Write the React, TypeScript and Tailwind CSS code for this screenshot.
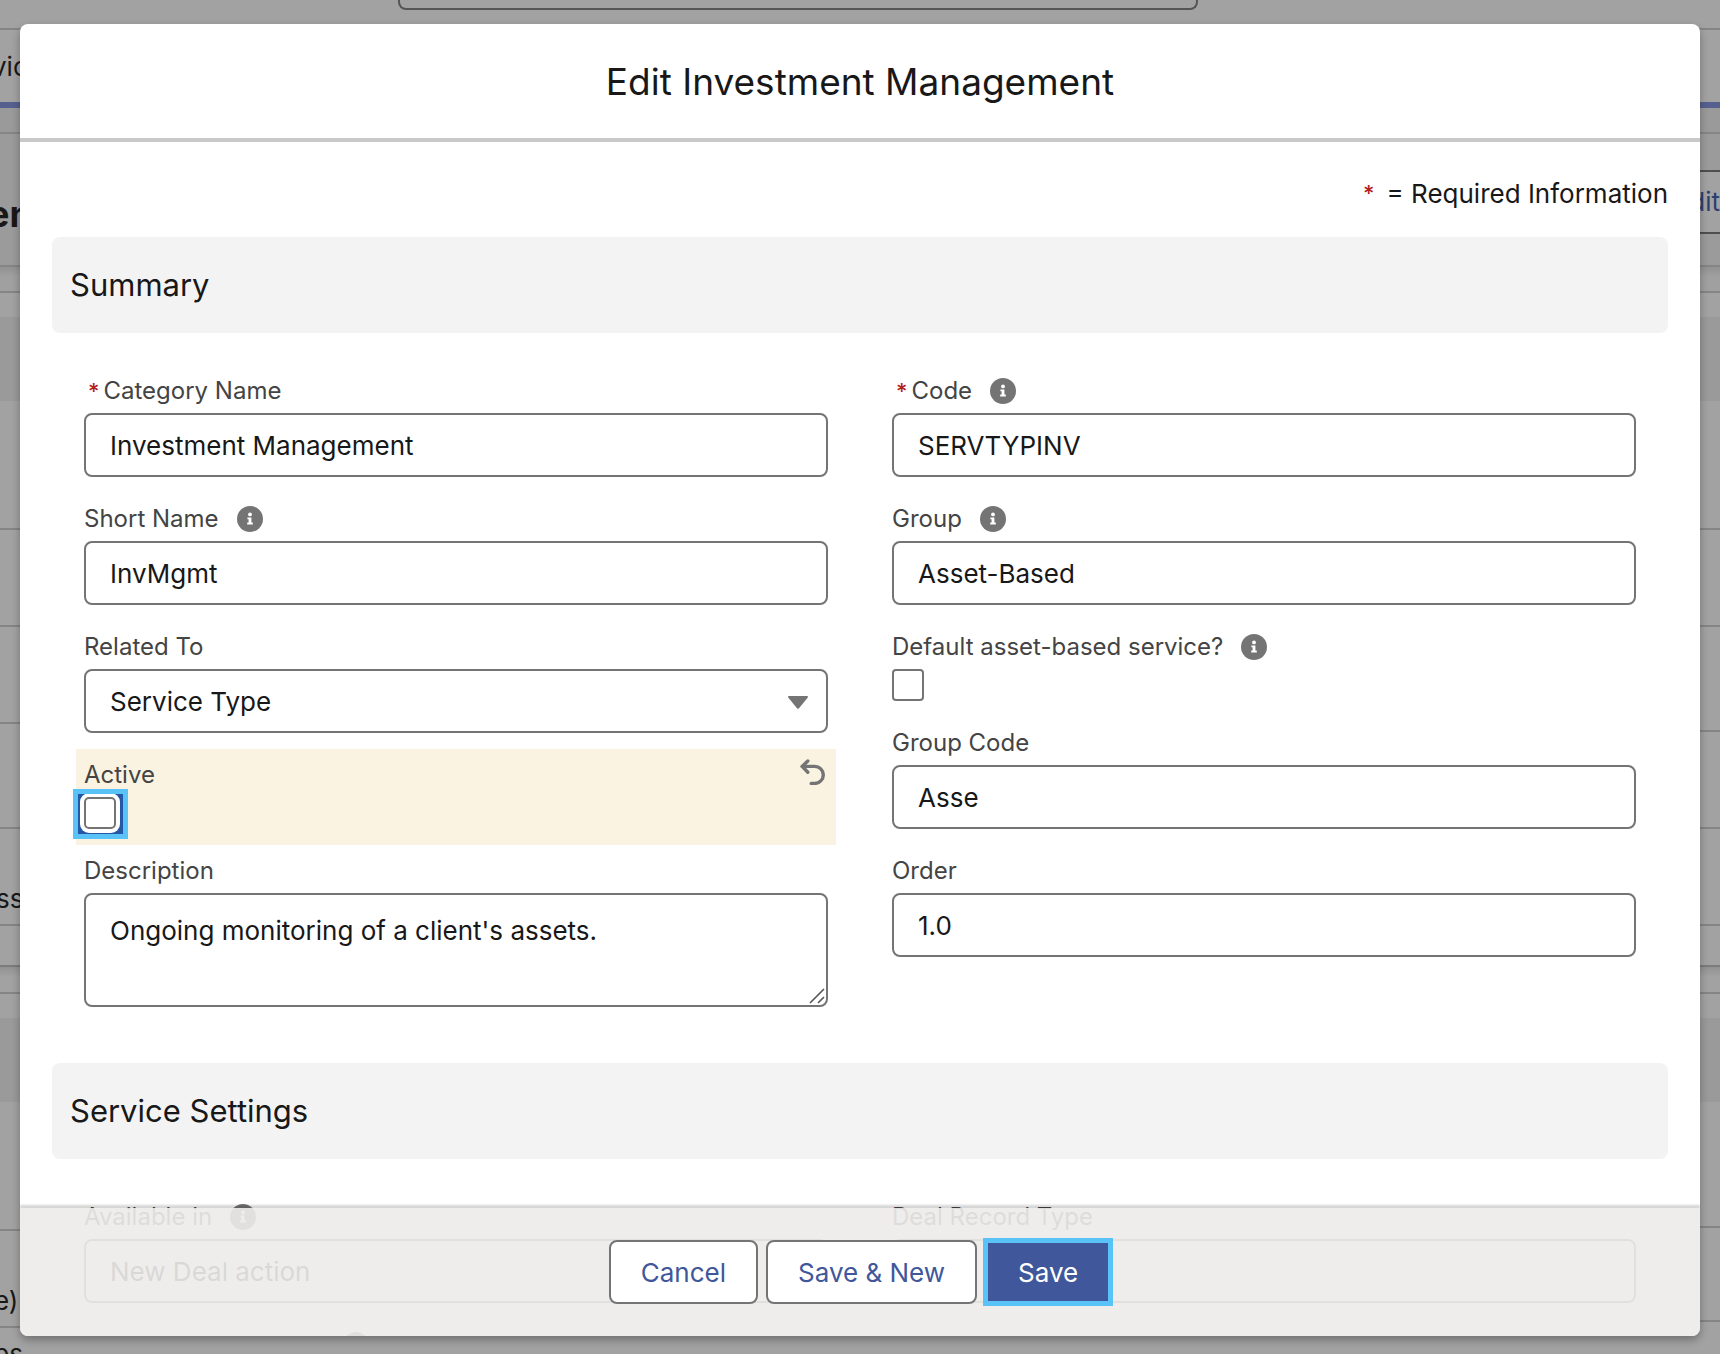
import React, { useState } from "react";

const controlClass =
  "block h-16 w-full rounded-lg border-2 border-[#747474] bg-white px-6 text-[26px] text-[#181818] outline-none";

function InfoIcon() {
  return (
    <svg viewBox="0 0 26 26" className="h-[26px] w-[26px] shrink-0" aria-hidden="true">
      <circle cx="13" cy="13" r="13" fill="#747474" />
      <circle cx="13" cy="8.4" r="1.9" fill="#fff" />
      <path d="M10.4 11.4h4v5.2h1.4v1.8h-5.6v-1.8h1.4v-3.4h-1.2z" fill="#fff" />
    </svg>
  );
}

interface FieldProps {
  id: string;
  label: string;
  required?: boolean;
  info?: boolean;
  changed?: boolean;
  onUndo?: () => void;
  children: React.ReactNode;
}

function Field({ id, label, required, info, changed, onUndo, children }: FieldProps) {
  return (
    <div className={`px-2 pt-2 pb-4 ${changed ? "bg-[#faf3e1]" : ""}`}>
      <div className="flex h-10 items-start text-[24px] leading-[36px] text-[#444444]">
        {required && <span className="mr-1 ml-1 text-[22px] font-medium text-[#b3201c]">*</span>}
        <label htmlFor={id}>{label}</label>
        {info && (
          <button type="button" aria-label={`Help ${label}`} className="ml-[18px] flex h-9 items-center">
            <InfoIcon />
          </button>
        )}
        {changed && (
          <button type="button" aria-label={`Undo ${label}`} onClick={onUndo} className="ml-auto">
            <svg
              viewBox="0 0 28 28"
              className="h-7 w-7"
              fill="none"
              stroke="#747474"
              strokeWidth="3.4"
              strokeLinecap="round"
              strokeLinejoin="round"
            >
              <path d="M7.8 4 2.2 9.4l5.6 5.8" />
              <path d="M2.2 9.4h12.6a8.5 8.5 0 0 1 0 17h-3.6" />
            </svg>
          </button>
        )}
      </div>
      {children}
    </div>
  );
}

function TextField({ value, ...field }: { value: string } & Omit<FieldProps, "children">) {
  return (
    <Field {...field}>
      <input id={field.id} type="text" defaultValue={value} className={controlClass} />
    </Field>
  );
}

function SectionTitle({ children }: { children: React.ReactNode }) {
  return (
    <h3 className="flex h-24 items-center rounded-lg bg-[#f3f3f3] px-[18px] text-[31px] text-[#181818]">
      {children}
    </h3>
  );
}

// The record page, dimmed behind the dialog
function RecordPage() {
  return (
    <div aria-hidden="true" className="h-full overflow-hidden bg-[#a2a2a2] text-[26px] text-[#181818]">
      <div className="flex h-[30px] items-start justify-center border-b-2 border-[#858585] pr-[124px]">
        <div className="h-2.5 w-[800px] rounded-b-lg border-2 border-t-0 border-[#555555]" />
      </div>
      <div className="flex h-[78px] items-center border-b-[6px] border-[#55608f]">
        <span className="-ml-2">vices</span>
      </div>
      <div className="h-6 bg-[#9a9a9a]" />
      <div className="flex h-[135px] items-center justify-between border-y-2 border-[#858585] bg-[#9b9b9b]">
        <span className="-ml-3 pt-7 text-[36px] font-bold">ent</span>
        <span className="mt-1 -mr-1 flex h-16 items-center border-y-2 border-[#4f4f4f] bg-[#a2a2a2] pr-1 pl-8 text-[#2f3f70]">
          Edit
        </span>
      </div>
      <div className="h-6 bg-linear-to-b from-[#929292] to-[#a0a0a0] to-40%" />
      <div className="h-[26px] border-t-2 border-[#858585]" />
      <div className="h-[84px] bg-[#9a9a9a]" />
      <div className="flex justify-between">
        <div className="w-1/2">
          <div className="h-[129px] border-b-2 border-[#858585]" />
          <div className="h-[97px] border-b-2 border-[#858585]" />
          <div className="h-[97px] border-b-2 border-[#858585]" />
          <div className="h-[105px] border-b-2 border-[#858585]" />
          <div className="flex h-[97px] items-end border-b-2 border-[#858585] pb-1.5">
            <span className="-ml-1">ss</span>
          </div>
        </div>
        <div className="w-1/2">
          <div className="h-[129px] border-b-2 border-[#858585]" />
          <div className="h-[97px] border-b-2 border-[#858585]" />
          <div className="h-[105px] border-b-2 border-[#858585]" />
          <div className="h-[97px] border-b-2 border-[#858585]" />
          <div className="h-[97px] border-b-2 border-[#858585]" />
        </div>
      </div>
      <div className="h-[41px] border-b-2 border-[#7c7c7c]" />
      <div className="h-[27px] border-b-2 border-[#858585] bg-linear-to-b from-[#929292] to-[#a2a2a2] to-40%" />
      <div className="h-6" />
      <div className="h-[84px] bg-[#9a9a9a]" />
      <div className="flex">
        <div className="w-1/2">
          <div className="h-[129px] border-b-2 border-[#858585]" />
          <div className="flex h-[97px] items-end border-b-2 border-[#858585] pb-1.5">
            <span className="-ml-1.5">e)</span>
          </div>
          <div className="pt-1.5">
            <span className="-ml-1.5">es</span>
          </div>
        </div>
        <div className="w-1/2">
          <div className="h-[126px] border-b-2 border-[#858585]" />
          <div className="h-[94px] border-b-2 border-[#858585]" />
        </div>
      </div>
    </div>
  );
}

export default function App() {
  const [active, setActive] = useState(false);
  const [defaultService, setDefaultService] = useState(false);

  return (
    <div className="relative h-screen overflow-hidden font-['Inter',sans-serif]">
      <RecordPage />

      <form
        role="dialog"
        aria-labelledby="dialog-title"
        onSubmit={(e) => e.preventDefault()}
        className="absolute inset-x-5 top-6 bottom-[18px] flex flex-col overflow-hidden rounded-lg bg-white shadow-[0_4px_8px_rgba(0,0,0,0.3)]"
      >
        <header className="border-b-4 border-[#c9c9c9] pt-8 pb-[30px]">
          <h2 id="dialog-title" className="text-center text-[37px] leading-[52px] text-[#181818]">
            Edit Investment Management
          </h2>
        </header>

        <div className="min-h-0 flex-1 overflow-hidden px-8 pt-8">
          <p className="mb-6 flex justify-end text-[26px] leading-[39px] text-[#181818]">
            <span className="mr-3 text-[22px] font-medium text-[#b3201c]">*</span>= Required Information
          </p>

          <SectionTitle>Summary</SectionTitle>
          <div className="flex gap-12 px-6 pt-8 pb-10">
            <div className="flex-1">
              <TextField id="name" label="Category Name" required value="Investment Management" />
              <TextField id="short-name" label="Short Name" info value="InvMgmt" />
              <Field id="related-to" label="Related To">
                <div className="relative">
                  <select id="related-to" className={`${controlClass} appearance-none`}>
                    <option>Service Type</option>
                  </select>
                  <svg viewBox="0 0 20 13" className="pointer-events-none absolute top-[27px] right-5 h-[13px] w-5">
                    <path d="M1 0h18q1.6.4.6 1.8L11 12.2q-1 1.2-2 0L.4 1.8Q-.6.4 1 0z" fill="#747474" />
                  </svg>
                </div>
              </Field>
              <Field id="active" label="Active" changed onUndo={() => setActive(true)}>
                <div className="relative h-8">
                  <span className="pointer-events-none absolute -top-2 -left-[11px] h-[50px] w-[55px] border-[5px] border-[#59c3f8] bg-[#2458a6]" />
                  <input
                    id="active"
                    type="checkbox"
                    checked={active}
                    onChange={(e) => setActive(e.target.checked)}
                    className="relative block h-8 w-8 appearance-none rounded-[5px] border-2 border-[#747474] bg-white shadow-[0_0_0_4px_#fff] outline-none checked:bg-[#41579b]"
                  />
                  <span className="pointer-events-none absolute -top-2 -left-[11px] h-[50px] w-[55px] border-[5px] border-[#59c3f8]" />
                </div>
              </Field>
              <Field id="description" label="Description">
                <div className="relative">
                  <textarea
                    id="description"
                    defaultValue="Ongoing monitoring of a client's assets."
                    className="block h-[114px] w-full resize-none rounded-lg border-2 border-[#747474] bg-white px-6 py-4 text-[26px] leading-[39px] text-[#181818] outline-none"
                  />
                  <svg
                    viewBox="0 0 16 16"
                    className="pointer-events-none absolute right-[3px] bottom-[3px] h-4 w-4"
                    stroke="#555"
                    strokeWidth="1.6"
                  >
                    <path d="M1 15 15 1M9 15l6-6" />
                  </svg>
                </div>
              </Field>
            </div>
            <div className="flex-1">
              <TextField id="code" label="Code" required info value="SERVTYPINV" />
              <TextField id="group" label="Group" info value="Asset-Based" />
              <Field id="default-service" label="Default asset-based service?" info>
                <input
                  id="default-service"
                  type="checkbox"
                  checked={defaultService}
                  onChange={(e) => setDefaultService(e.target.checked)}
                  className="block h-8 w-8 appearance-none rounded-[4px] border-2 border-[#747474] bg-white checked:bg-[#41579b]"
                />
              </Field>
              <TextField id="group-code" label="Group Code" value="Asse" />
              <TextField id="order" label="Order" value="1.0" />
            </div>
          </div>

          <SectionTitle>Service Settings</SectionTitle>
          <div className="flex gap-12 px-6 pt-8">
            <div className="flex-1">
              <TextField id="available-in" label="Available in" info value="New Deal action" />
              <div className="flex h-[52px] items-center pl-[267px]">
                <InfoIcon />
              </div>
            </div>
            <div className="flex-1">
              <TextField id="deal-record-type" label="Deal Record Type" value="" />
            </div>
          </div>
        </div>

        <footer className="absolute inset-x-0 bottom-0 flex h-32 items-center justify-center gap-2 bg-[#ecebe9]/91 text-[26px] shadow-[0_-3px_2px_rgba(0,0,0,0.16)]">
          <button type="button" className="h-16 rounded-lg border-2 border-[#747474] bg-white px-[30px] text-[#41579b]">
            Cancel
          </button>
          <button type="button" className="h-16 rounded-lg border-2 border-[#747474] bg-white px-[30px] text-[#41579b]">
            Save &amp; New
          </button>
          <button
            type="submit"
            className="h-16 border-[3px] border-[#59c3f8] bg-[#41579b] px-[30px] text-white shadow-[0_0_0_2px_#59c3f8] outline-none"
          >
            Save
          </button>
        </footer>
      </form>
    </div>
  );
}
